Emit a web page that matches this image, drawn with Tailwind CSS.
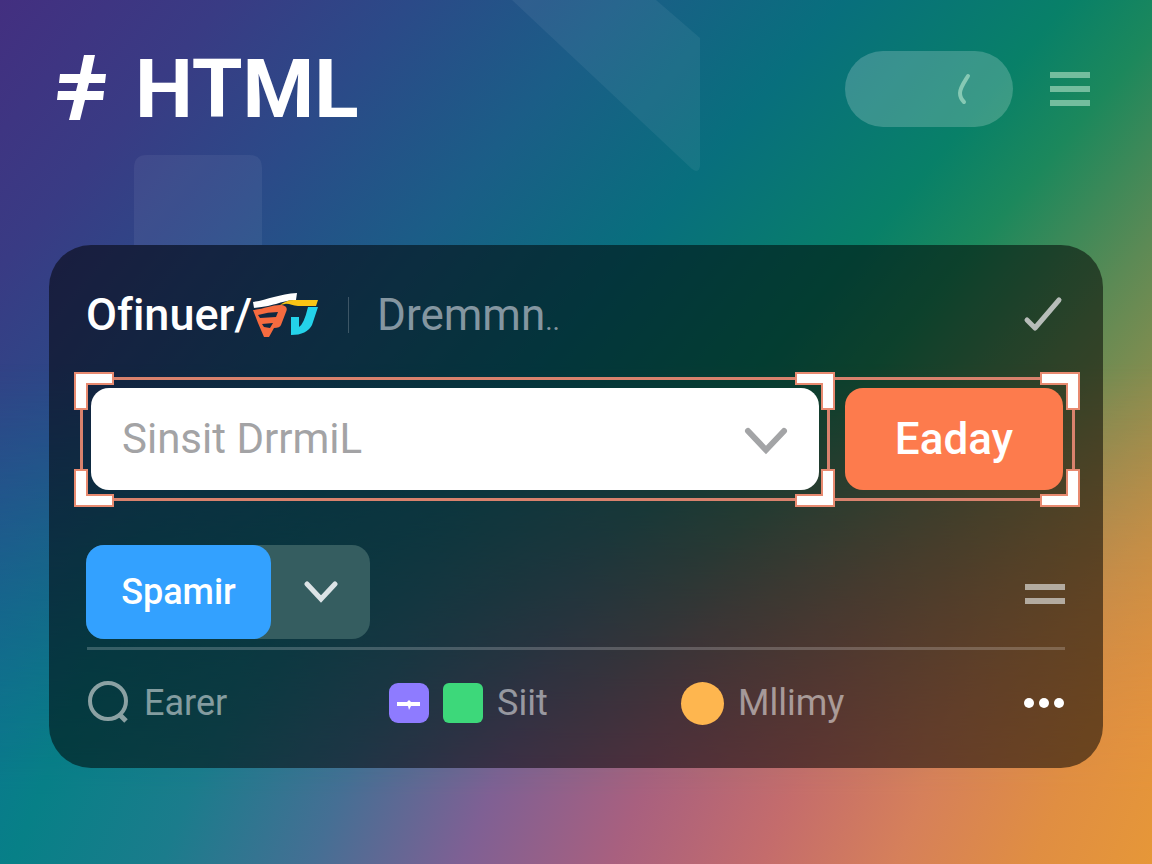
<!DOCTYPE html>
<html lang="en">
<head>
<meta charset="utf-8">
<meta name="viewport" content="width=device-width, initial-scale=1">
<title>HTML</title>
<script src="https://cdn.jsdelivr.net/npm/@tailwindcss/browser@4"></script>
</head>
<body class="relative min-h-screen overflow-x-hidden font-['Roboto','Liberation_Sans',sans-serif] text-white bg-[linear-gradient(130deg,#432f80_0%,#393b84_12%,#2b4a88_22%,#1b5d87_33%,#086f7d_45%,#088068_57%,#1c885c_63%,#5c8a55_72%,#b09048_85%,#de8f40_94%,#e69738_100%)]">

<!-- Warm lower half of the backdrop, faded in from the middle -->
<div class="absolute inset-0 bg-[linear-gradient(112deg,#0f6c98_10%,#078087_24%,#1b7c8c_34%,#456f94_44%,#7f6094_54%,#a8607f_64%,#c46c6c_74%,#d6805a_83%,#e08e42_92%,#e69738_100%)] [mask-image:linear-gradient(to_bottom,transparent_42%,black_92%)]"></div>

<!-- Backdrop shapes -->
<svg class="absolute left-0 top-0" width="720" height="260" viewBox="0 0 720 260" fill="#fff" aria-hidden="true">
  <path d="M512 0H656L700 38V166Q699 174 692 169Z" fill-opacity=".06"/>
  <path d="M134 245V168Q134 155 147 155H249Q262 155 262 168V245Z" fill-opacity=".06"/>
</svg>

<div class="relative px-[49px] pt-[51px] pb-24">
  <header class="flex h-[76px] items-center pr-[13px] pl-2">
    <svg width="50" height="68" viewBox="0 0 50 68" fill="#fff" aria-hidden="true">
      <path d="M27 0H38L34 19H49L48 28H32L30 36H47L46 45H28L23 65H12L17 45H0L1 36H19L21 28H2L3 19H23Z"/>
    </svg>
    <h1 class="ml-7 text-[82px] leading-[76px] font-bold">HTML</h1>
    <button class="ml-auto flex h-[76px] w-[168px] items-center justify-end rounded-full bg-white/20 pr-[42px]" aria-label="Toggle">
      <svg width="14" height="32" viewBox="0 0 14 32" fill="none" stroke="#86c9b4" stroke-width="4" stroke-linecap="round"><path d="M11 3C6 11 3 15 3 20C3 24 5 27 7 29"/></svg>
    </button>
    <button class="ml-[37px]" aria-label="Menu">
      <svg width="40" height="34" viewBox="0 0 40 34" fill="#74bd9e"><path d="M0 0H40V6H0ZM0 14H40V20H0ZM0 28H40V34H0Z"/></svg>
    </button>
  </header>

  <main class="mt-[118px] rounded-[42px] bg-black/52 pt-11 pr-[28px] pb-10 pl-[31px]">
    <div class="flex h-[52px] items-center pr-[12px] pl-[6px]">
      <h2 class="text-[45px] leading-[52px] font-medium [font-variant-ligatures:none]">Ofinuer/</h2>
      <svg class="shrink-0" width="68" height="46" viewBox="0 0 68 46" aria-hidden="true">
        <path d="M1 10C15 8 27 2 45 1L44 8C31 8 24 14 2 16Z" fill="#fff"/>
        <path d="M28 13C32 10 36 8 42 8H66L64 14H46C40 14 37 11 33 12Z" fill="#f9c414"/>
        <path fill-rule="evenodd" d="M1 18C12 17 20 13 28 13C34 13 36 16 34 20L29 33Q28 36 22 36L17 45H12L6 31ZM6 23L8 26L24 25L26 20Q16 20 6 23ZM10 32L12 35L18 36L21 31Z" fill="#f66b3f"/>
        <path d="M56 15H66L60 33Q55 43 39 43V25H47V35Q52 32 56 15Z" fill="#24d2ea"/>
      </svg>
      <div class="ml-7 h-9 w-px bg-white/20"></div>
      <span class="ml-7 text-[44px] leading-[52px] text-[#8496a1]">Dremmn<span class="text-[28px] leading-none">..</span></span>
      <svg class="ml-auto" width="40" height="38" viewBox="0 0 40 38" fill="none" stroke="#b7bdb9" stroke-width="5" stroke-linecap="round" stroke-linejoin="round" role="img" aria-label="Done"><path d="M4 24L12 32L36 4"/></svg>
    </div>

    <form class="relative mt-9 flex">
      <div class="relative flex-1 border-[3px] border-[#d9826d] p-2">
        <div class="flex h-[102px] items-center rounded-[18px] bg-white pr-[31px] pl-[31px]">
          <input aria-label="Search" placeholder="Sinsit DrrmiL" class="w-full min-w-0 flex-1 bg-transparent text-[42px] leading-[52px] text-gray-700 outline-none placeholder:text-[#a3a3a5]">
          <button type="button" class="mt-1" aria-label="Open list">
            <svg width="44" height="28" viewBox="0 0 44 28" fill="none" stroke="#a3a4a6" stroke-width="6" stroke-linecap="round"><path d="M4 4L22 23L40 4"/></svg>
          </button>
        </div>
        <svg class="absolute -top-2 -right-2" width="40" height="38" viewBox="0 0 40 38" fill="#fff" stroke="#e88a70" stroke-width="2"><path d="M1 1H39V37H27V12H1Z"/></svg>
        <svg class="absolute -right-2 -bottom-[9px]" width="40" height="38" viewBox="0 0 40 38" fill="#fff" stroke="#e88a70" stroke-width="2"><path d="M27 1H39V37H1V26H27Z"/></svg>
      </div>
      <div class="border-y-[3px] border-r-[3px] border-[#d9826d] py-2 pr-[9px] pl-[15px]">
        <button type="button" class="h-[102px] w-[218px] rounded-[18px] bg-[#fd7b4d] text-[44px] font-medium">Eaday</button>
      </div>
      <svg class="absolute -top-[5px] -left-[6px]" width="40" height="38" viewBox="0 0 40 38" fill="#fff" stroke="#e88a70" stroke-width="2"><path d="M1 1H39V12H13V37H1Z"/></svg>
      <svg class="absolute -bottom-[6px] -left-[6px]" width="40" height="38" viewBox="0 0 40 38" fill="#fff" stroke="#e88a70" stroke-width="2"><path d="M1 1H13V26H39V37H1Z"/></svg>
      <svg class="absolute -top-[5px] -right-[5px]" width="40" height="38" viewBox="0 0 40 38" fill="#fff" stroke="#e88a70" stroke-width="2"><path d="M1 1H39V37H27V12H1Z"/></svg>
      <svg class="absolute -right-[5px] -bottom-[6px]" width="40" height="38" viewBox="0 0 40 38" fill="#fff" stroke="#e88a70" stroke-width="2"><path d="M27 1H39V37H1V26H27Z"/></svg>
    </form>

    <div class="mt-11 flex items-center pr-[10px] pl-[6px]">
      <div class="flex rounded-[18px] bg-[#355d60]">
        <button class="h-[94px] w-[185px] rounded-[18px] bg-[#33a1ff] text-[36px] font-medium">Spamir</button>
        <button class="flex w-[99px] items-center justify-center" aria-label="More options">
          <svg width="34" height="24" viewBox="0 0 34 24" fill="none" stroke="#dce3e6" stroke-width="5" stroke-linecap="round"><path d="M3 4L17 19L31 4"/></svg>
        </button>
      </div>
      <button class="mt-1 ml-auto" aria-label="Reorder">
        <svg width="40" height="20" viewBox="0 0 40 20" fill="#b3aba0"><path d="M0 0H40V6H0ZM0 14H40V20H0Z"/></svg>
      </button>
    </div>

    <hr class="mt-2 mr-[10px] ml-[7px] border-t-[3px] border-white/20">

    <nav class="mt-7 flex h-[50px] items-center pr-[10px] pl-2 text-[36px] leading-[50px] text-white/50">
      <a href="#" class="flex w-[301px] items-center gap-[14px]">
        <svg width="42" height="44" viewBox="0 0 42 44" fill="none" stroke="#8ba1a3" stroke-width="4"><circle cx="20" cy="20" r="18"/><path d="M31 33L38 40" stroke-width="5"/></svg>
        Earer
      </a>
      <a href="#" class="flex w-[292px] items-center gap-[14px]">
        <svg class="shrink-0" width="40" height="40" viewBox="0 0 40 40"><rect width="40" height="40" rx="9" fill="#8e7bff"/><path d="M8 19H18L20 17L22 19H31V23H22L20 27L19 23H8Z" fill="#fff"/></svg>
        <span class="size-10 shrink-0 rounded-md bg-[#3dd87a]"></span>
        Siit
      </a>
      <a href="#" class="flex items-center gap-[14px]">
        <span class="size-[43px] rounded-full bg-[#feb64f]"></span>
        Mllimy
      </a>
      <button class="ml-auto" aria-label="More">
        <svg width="41" height="10" viewBox="0 0 41 10" fill="#fff"><circle cx="5" cy="5" r="5"/><circle cx="20" cy="5" r="5"/><circle cx="35" cy="5" r="5"/></svg>
      </button>
    </nav>
  </main>
</div>
</body>
</html>
